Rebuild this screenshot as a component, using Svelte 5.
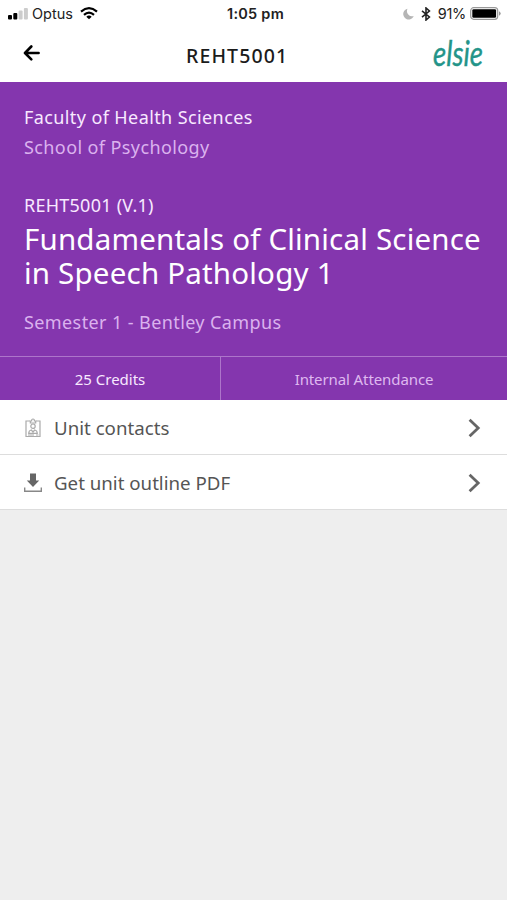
<script lang="ts">
  const unit = {
    code: "REHT5001",
    version: "(V.1)",
    faculty: "Faculty of Health Sciences",
    school: "School of Psychology",
    title: ["Fundamentals of Clinical Science", "in Speech Pathology 1"],
    availability: "Semester 1 - Bentley Campus",
    credits: "25 Credits",
    attendance: "Internal Attendance",
  };

  const links = [
    { icon: "contacts", label: "Unit contacts" },
    { icon: "download", label: "Get unit outline PDF" },
  ];
</script>

<div class="screen">
  <div class="status">
    <div class="carrier">
      <svg width="20" height="12" viewBox="0 0 20 12">
        <rect x="0" y="7" width="4" height="4.5" rx="1" />
        <rect x="5.3" y="5" width="4" height="6.5" rx="1" />
        <rect x="10.6" y="2.5" width="4" height="9" rx="1" fill="#ccc" />
        <rect x="15.9" y="0" width="4" height="11.5" rx="1" fill="#ccc" />
      </svg>
      <span class="network">Optus</span>
      <svg width="18" height="13" viewBox="0 0 18 13" fill="none" stroke="#000" stroke-width="2.2">
        <path d="M1 4.6Q9-2.2 17 4.6" />
        <path d="M4 7.9Q9 3.5 14 7.9" />
        <path d="M9 12.3L6.3 9.7Q9 7.4 11.7 9.7Z" fill="#000" stroke="none" />
      </svg>
    </div>
    <span class="time">1:05 pm</span>
    <div class="power">
      <svg class="moon" width="11" height="12" viewBox="0 0 11 12">
        <path d="M4.5.8A5.4 5.4 0 1 0 10.7 8A5.2 5.2 0 0 1 4.5.8Z" fill="#b5b5b5" />
      </svg>
      <svg class="bluetooth" width="10" height="14" viewBox="0 0 10 14" fill="none" stroke="#222" stroke-width="1.6">
        <path d="M1 3.9L8.4 10L5 13V1L8.4 4L1 10.1" />
      </svg>
      <span class="percent">91%</span>
      <svg width="31" height="13" viewBox="0 0 31 13">
        <rect x=".7" y=".7" width="27" height="11.6" rx="3" fill="#fff" stroke="#999" stroke-width="1.2" />
        <rect x="2.3" y="2.2" width="23.8" height="8.6" rx="1.3" />
        <path d="M29 4.3Q30.7 5 30.7 6.5T29 8.7Z" fill="#999" />
      </svg>
    </div>
  </div>

  <header>
    <svg class="back" width="18" height="16" viewBox="0 0 18 16" fill="none" stroke="#000" stroke-width="2.6" stroke-linecap="round" stroke-linejoin="round">
      <path d="M9.3 1.5L3 8L9.3 14.3M3.3 8H16.6" />
    </svg>
    <h1>{unit.code}</h1>
    <svg class="logo" width="60" height="54" viewBox="0 0 60 54">
      <text x="5" y="38" textLength="50" lengthAdjust="spacingAndGlyphs">elsie</text>
    </svg>
  </header>

  <section class="unit">
    <div class="details">
      <p class="faculty">{unit.faculty}</p>
      <p class="school">{unit.school}</p>
      <p class="code">{unit.code} {unit.version}</p>
      <h2>
        {#each unit.title as line}
          <span>{line}</span>
        {/each}
      </h2>
      <p class="semester">{unit.availability}</p>
    </div>
    <div class="facts">
      <div class="credits">{unit.credits}</div>
      <div class="attendance">{unit.attendance}</div>
    </div>
  </section>

  <ul>
    {#each links as link}
      <li>
        {#if link.icon === "contacts"}
          <svg class="icon" width="18" height="20" viewBox="0 0 18 20" fill="none" stroke="#aaa" stroke-width="1.2">
            <path d="M6 3H2V18.5H16V3H12" />
            <path d="M6.3 5V3H7.6Q7.5 1 9 1T10.4 3H11.7V5Z" />
            <circle cx="9" cy="8.2" r="2.2" />
            <path d="M4.7 15.4Q4.8 12.4 7.3 12L9 14L10.7 12Q13.2 12.4 13.3 15.4Z" />
            <path d="M4 17H10M12 17H14.5" />
          </svg>
        {:else}
          <svg class="icon" width="18" height="20" viewBox="0 0 18 20">
            <path d="M6 .5H12V7.5H15.2L9 14L2.8 7.5H6Z" fill="#666" />
            <path d="M.7 14.5V18.3H17.3V14.5" fill="none" stroke="#888" stroke-width="1.4" />
          </svg>
        {/if}
        <span class="label">{link.label}</span>
        <svg class="chevron" width="13" height="20" viewBox="0 0 13 20" fill="none" stroke="#666" stroke-width="2.8">
          <path d="M1.6 1.8L10.2 10L1.6 18.2" />
        </svg>
      </li>
    {/each}
  </ul>
</div>

<style>
  :global(body) {
    margin: 0;
    background: #eee;
  }

  .screen {
    min-height: 900px;
    background: #eee;
    font-family: "Noto Sans", "Open Sans", sans-serif;
  }

  p, h1, h2, ul {
    margin: 0;
    padding: 0;
    font-weight: 400;
  }

  svg {
    display: block;
    flex: none;
  }

  .status {
    box-sizing: border-box;
    height: 27px;
    padding: 0 6px 0 8px;
    display: grid;
    grid-template-columns: 1fr auto 1fr;
    align-items: center;
    background: #fff;
    color: #222;
    font: 14.5px/27px Inter, sans-serif;
  }

  .carrier, .power {
    display: flex;
    align-items: center;
  }

  .network {
    margin: 0 7px 0 4px;
  }

  .time {
    margin-left: 2px;
    font-weight: 600;
    letter-spacing: 0.25px;
  }

  .power {
    justify-content: flex-end;
  }

  .moon {
    margin-right: 7px;
  }

  .bluetooth {
    margin-right: 7px;
  }

  .percent {
    margin-right: 4px;
    letter-spacing: -0.3px;
  }

  header {
    height: 55px;
    padding: 0 19px 0 22px;
    display: grid;
    grid-template-columns: 164px 1fr auto;
    align-items: center;
    background: #fff;
  }

  .back {
    margin-bottom: 3px;
  }

  h1 {
    padding-top: 2px;
    color: #1b1b1b;
    font-size: 19.5px;
    line-height: 53px;
    font-weight: 500;
    letter-spacing: 1.1px;
  }

  .logo text {
    fill: #239489;
    stroke: #239489;
    stroke-width: 0.4px;
    font: italic 400 35px Lato, sans-serif;
  }

  .unit {
    box-sizing: border-box;
    height: 318px;
    display: flex;
    flex-direction: column;
    background: #8436ae;
    color: #f8e9ff;
  }

  .details {
    flex: 1;
    padding: 20px 24px 0;
    font-size: 18px;
    line-height: 30px;
    letter-spacing: 0.4px;
    white-space: nowrap;
  }

  .school, .semester {
    color: #dbb2ee;
  }

  .code {
    margin-top: 28px;
    letter-spacing: 0.25px;
  }

  h2 {
    margin-top: 2px;
    color: #fff;
    font-size: 29.5px;
    line-height: 34px;
    letter-spacing: 0.2px;
  }

  h2 span {
    display: block;
  }

  .semester {
    margin-top: 17px;
  }

  .facts {
    height: 43px;
    display: grid;
    grid-template-columns: 220px 1fr;
    border-top: 1px solid #ad75ca;
    font-size: 15px;
    line-height: 43px;
    text-align: center;
  }

  .credits, .attendance {
    box-sizing: border-box;
    height: 43px;
    padding-top: 1px;
    line-height: 42px;
  }

  .attendance {
    border-left: 1px solid #ad75ca;
    color: #dfb9f0;
    letter-spacing: -0.1px;
  }

  ul {
    list-style: none;
  }

  li {
    box-sizing: border-box;
    height: 55px;
    padding: 2px 26px 0 24px;
    display: flex;
    align-items: center;
    background: #fff;
    border-bottom: 1px solid #ddd;
  }

  .label {
    flex: 1;
    margin: 0 0 2px 12px;
    color: #555;
    font-size: 18.7px;
  }
</style>
